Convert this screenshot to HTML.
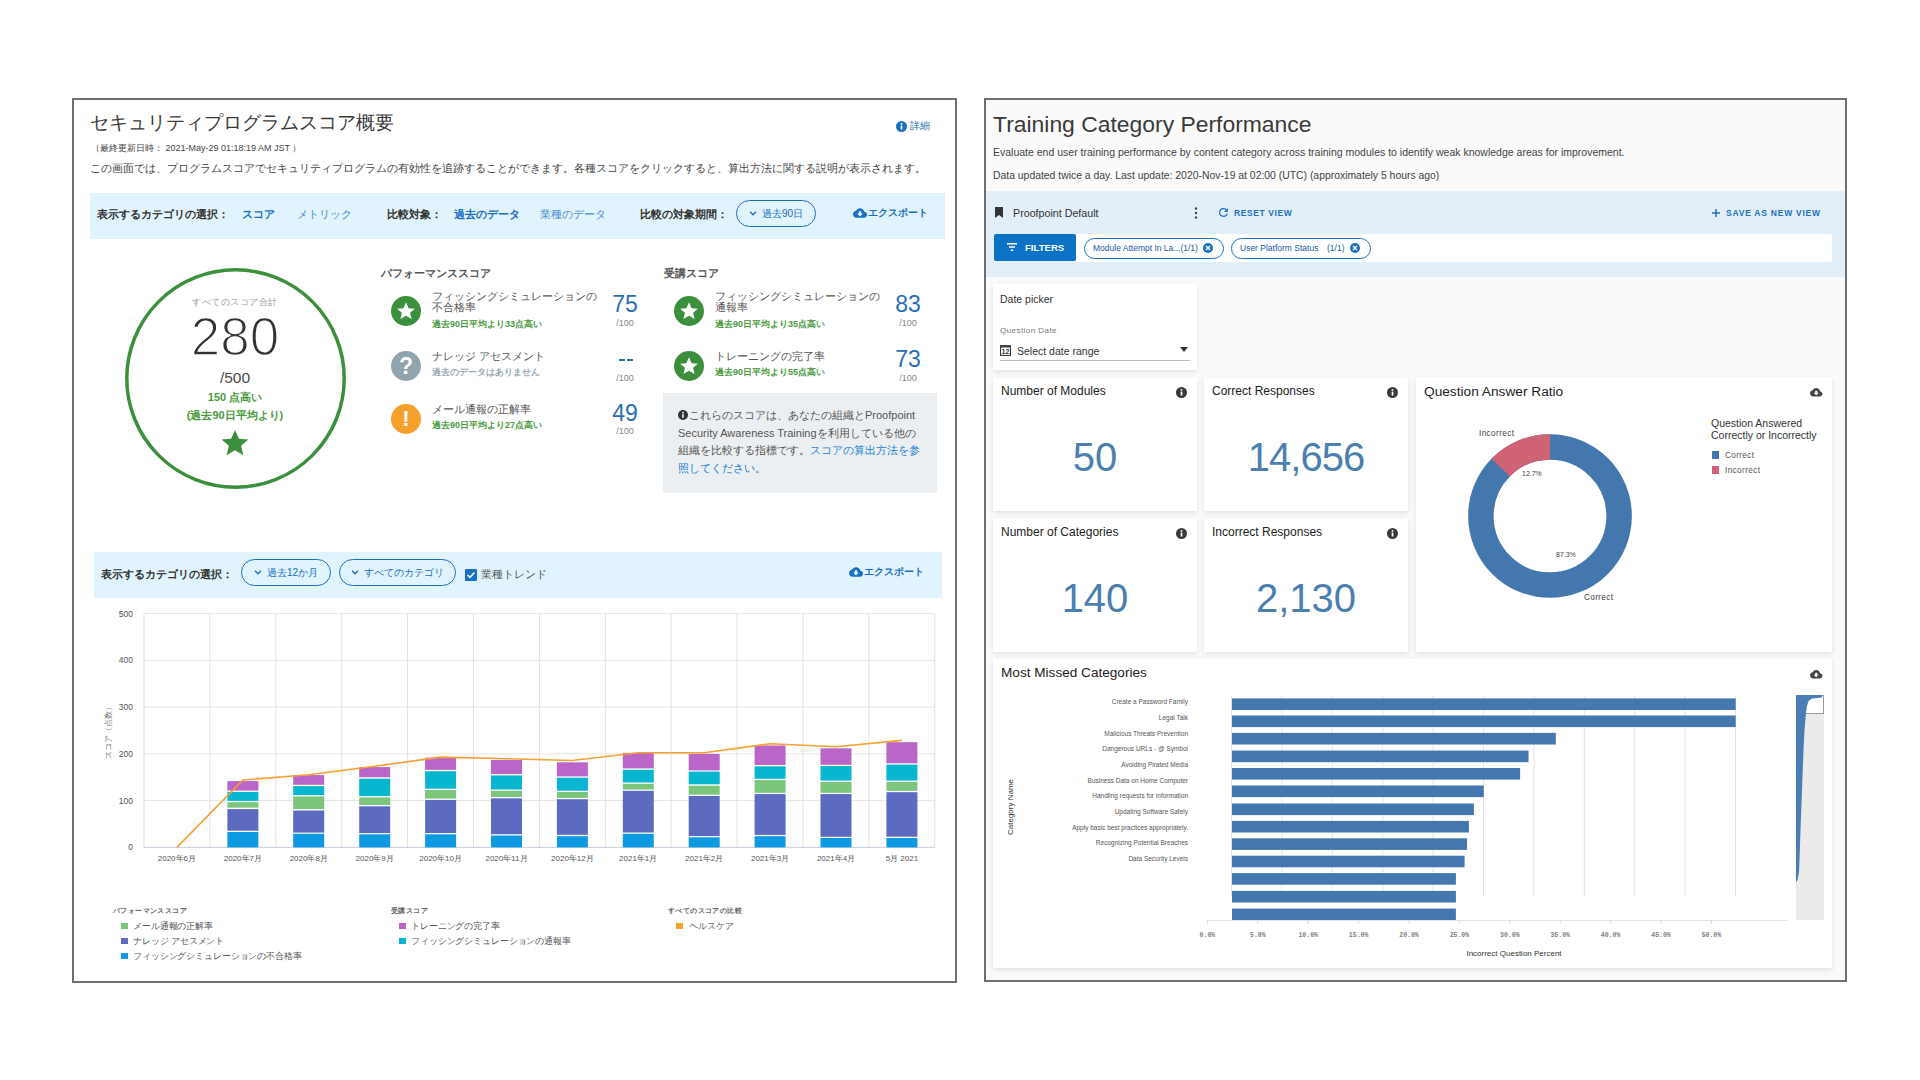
<!DOCTYPE html>
<html><head><meta charset="utf-8">
<style>
*{box-sizing:border-box;margin:0;padding:0}
html,body{width:1920px;height:1080px;overflow:hidden;background:#fff;font-family:"Liberation Sans",sans-serif;color:#333}
.a{position:absolute;white-space:nowrap}
#L{position:absolute;left:72px;top:98px;width:885px;height:885px;border:2px solid #707070;background:#fff}
#R{position:absolute;left:984px;top:98px;width:863px;height:884px;border:2px solid #6f6f6f;background:#fafafa}
.blue{color:#1a70c0}
.grn{color:#3f9a3f;font-weight:bold}
.card{background:#fff;box-shadow:0 2px 5px rgba(0,0,0,0.10)}
</style></head><body>
<div id="L"></div>
<div id="R"></div>

<!-- LEFT TOP -->
<div class="a" style="left:90px;top:110px;font-size:19px;color:#3a3a3a;">セキュリティプログラムスコア概要</div>
<div class="a" style="left:91px;top:142px;font-size:9px;color:#444">（最終更新日時： 2021-May-29 01:18:19 AM JST ）</div>
<div class="a" style="left:90px;top:161px;font-size:11px;color:#444">この画面では、プログラムスコアでセキュリティプログラムの有効性を追跡することができます。各種スコアをクリックすると、算出方法に関する説明が表示されます。</div>
<svg class="a" style="left:896px;top:121px" width="11" height="11" viewBox="0 0 12 12"><circle cx="6" cy="6" r="6" fill="#1a70c0"/><rect x="5.1" y="5" width="1.8" height="4.3" fill="#fff"/><circle cx="6" cy="3.2" r="1" fill="#fff"/></svg><div class="a" style="left:910px;top:119px;font-size:10px;color:#1a70c0">詳細</div>

<div class="a" style="left:90px;top:193px;width:855px;height:46px;background:#e1f3fc"></div>
<div class="a" style="left:97px;top:207px;font-size:11px;font-weight:bold;color:#333">表示するカテゴリの選択：</div>
<div class="a blue" style="left:242px;top:207px;font-size:11px;font-weight:bold">スコア</div>
<div class="a blue" style="left:297px;top:207px;font-size:11px;color:#4a8ad0">メトリック</div>
<div class="a" style="left:387px;top:207px;font-size:11px;font-weight:bold;color:#333">比較対象：</div>
<div class="a blue" style="left:454px;top:207px;font-size:11px;font-weight:bold">過去のデータ</div>
<div class="a blue" style="left:540px;top:207px;font-size:11px;color:#4a8ad0">業種のデータ</div>
<div class="a" style="left:640px;top:207px;font-size:11px;font-weight:bold;color:#333">比較の対象期間：</div>
<div class="a" style="left:736px;top:200px;width:80px;height:27px;border:1px solid #1a70c0;border-radius:14px;font-size:10px;color:#1a70c0;text-align:center;line-height:25px"><svg width="8" height="5" viewBox="0 0 8 5" style="vertical-align:1px;margin-right:5px"><path d="M1 0.8l3 3 3-3" stroke="#1a70c0" stroke-width="1.3" fill="none"/></svg>過去90日</div>
<div class="a" style="left:853px;top:208px;line-height:0"><svg width="14" height="10" viewBox="0 4 24 16"><path d="M19.35 10.04C18.67 6.59 15.64 4 12 4 9.11 4 6.6 5.64 5.35 8.04 2.34 8.36 0 10.91 0 14c0 3.31 2.69 6 6 6h13c2.76 0 5-2.24 5-5 0-2.64-2.05-4.78-4.65-4.96zM17 13l-5 5-5-5h3V9h4v4h3z" fill="#1a70c0"/></svg></div><div class="a blue" style="left:868px;top:206px;font-size:10px;font-weight:bold">エクスポート</div>


<!-- CIRCLE -->
<svg class="a" style="left:120px;top:263px" width="231" height="231"><circle cx="115.5" cy="115.5" r="108.7" fill="none" stroke="#3c8f3c" stroke-width="3.5"/></svg>
<div class="a" style="left:135px;top:296px;width:200px;text-align:center;font-size:9px;color:#999;letter-spacing:0.5px">すべてのスコア合計</div>
<div class="a" style="left:135px;top:307px;width:200px;text-align:center;font-size:53px;color:#333;line-height:60px;-webkit-text-stroke:1.6px #fff;letter-spacing:0px">280</div>
<div class="a" style="left:135px;top:369px;width:200px;text-align:center;font-size:15.5px;color:#4a4a4a">/500</div>
<div class="a grn" style="left:135px;top:390px;width:200px;text-align:center;font-size:11px;color:#4b9a40">150 点高い</div>
<div class="a grn" style="left:135px;top:408px;width:200px;text-align:center;font-size:11px;color:#4b9a40">(過去90日平均より)</div>
<div class="a" style="left:220px;top:428px"><svg width="30" height="30" viewBox="0 0 24 24"><path d="M12 1.5l3.1 7.1 7.6.6-5.8 5 1.8 7.5L12 17.7l-6.7 4 1.8-7.5-5.8-5 7.6-.6z" fill="#3c8f3c"/></svg></div>

<!-- PERFORMANCE -->
<div class="a" style="left:381px;top:266px;font-size:11px;font-weight:bold;color:#555">パフォーマンススコア</div>
<div class="a" style="left:391px;top:296px;width:30px;height:30px;border-radius:50%;background:#3c8f3c"><svg style="position:absolute;left:5px;top:4.5px" width="20" height="20" viewBox="0 0 24 24"><path d="M12 1.5l3.1 7.1 7.6.6-5.8 5 1.8 7.5L12 17.7l-6.7 4 1.8-7.5-5.8-5 7.6-.6z" fill="#fff"/></svg></div>
<div class="a" style="left:432px;top:291px;font-size:10.5px;color:#555;line-height:11px">フィッシングシミュレーションの<br>不合格率</div>
<div class="a grn" style="left:432px;top:318px;font-size:9px;color:#4b9a40">過去90日平均より33点高い</div>
<div class="a" style="left:600px;top:291px;width:50px;text-align:center;font-size:23px;color:#2a6fb5">75</div>
<div class="a" style="left:600px;top:318px;width:50px;text-align:center;font-size:9px;color:#888">/100</div>

<div class="a" style="left:391px;top:351px;width:30px;height:30px;border-radius:50%;background:#90a4ae;color:#fff;font-size:23px;font-weight:bold;text-align:center;line-height:30px">?</div>
<div class="a" style="left:432px;top:350px;font-size:10.5px;color:#555">ナレッジ アセスメント</div>
<div class="a" style="left:432px;top:366px;font-size:9px;color:#9aabb5;font-weight:bold">過去のデータはありません</div>
<div class="a" style="left:619px;top:359px;width:6px;height:2px;background:#2a6fb5"></div><div class="a" style="left:626.5px;top:359px;width:6px;height:2px;background:#2a6fb5"></div>
<div class="a" style="left:600px;top:373px;width:50px;text-align:center;font-size:9px;color:#888">/100</div>

<div class="a" style="left:391px;top:404px;width:30px;height:30px;border-radius:50%;background:#f5a02a;color:#fff;font-size:22px;font-weight:bold;text-align:center;line-height:30px">!</div>
<div class="a" style="left:432px;top:403px;font-size:10.5px;color:#555">メール通報の正解率</div>
<div class="a grn" style="left:432px;top:419px;font-size:9px;color:#4b9a40">過去90日平均より27点高い</div>
<div class="a" style="left:600px;top:400px;width:50px;text-align:center;font-size:23px;color:#2a6fb5">49</div>
<div class="a" style="left:600px;top:426px;width:50px;text-align:center;font-size:9px;color:#888">/100</div>

<!-- JUKOU -->
<div class="a" style="left:664px;top:266px;font-size:11px;font-weight:bold;color:#555">受講スコア</div>
<div class="a" style="left:674px;top:296px;width:30px;height:30px;border-radius:50%;background:#3c8f3c"><svg style="position:absolute;left:5px;top:4.5px" width="20" height="20" viewBox="0 0 24 24"><path d="M12 1.5l3.1 7.1 7.6.6-5.8 5 1.8 7.5L12 17.7l-6.7 4 1.8-7.5-5.8-5 7.6-.6z" fill="#fff"/></svg></div>
<div class="a" style="left:715px;top:291px;font-size:10.5px;color:#555;line-height:11px">フィッシングシミュレーションの<br>通報率</div>
<div class="a grn" style="left:715px;top:318px;font-size:9px;color:#4b9a40">過去90日平均より35点高い</div>
<div class="a" style="left:883px;top:291px;width:50px;text-align:center;font-size:23px;color:#2a6fb5">83</div>
<div class="a" style="left:883px;top:318px;width:50px;text-align:center;font-size:9px;color:#888">/100</div>
<div class="a" style="left:674px;top:351px;width:30px;height:30px;border-radius:50%;background:#3c8f3c"><svg style="position:absolute;left:5px;top:4.5px" width="20" height="20" viewBox="0 0 24 24"><path d="M12 1.5l3.1 7.1 7.6.6-5.8 5 1.8 7.5L12 17.7l-6.7 4 1.8-7.5-5.8-5 7.6-.6z" fill="#fff"/></svg></div>
<div class="a" style="left:715px;top:350px;font-size:10.5px;color:#555">トレーニングの完了率</div>
<div class="a grn" style="left:715px;top:366px;font-size:9px;color:#4b9a40">過去90日平均より55点高い</div>
<div class="a" style="left:883px;top:346px;width:50px;text-align:center;font-size:23px;color:#2a6fb5">73</div>
<div class="a" style="left:883px;top:373px;width:50px;text-align:center;font-size:9px;color:#888">/100</div>

<div class="a" style="left:663px;top:393px;width:274px;height:100px;background:#eceff1"></div>
<div class="a" style="left:678px;top:407px;font-size:11px;color:#555;line-height:17.6px;white-space:normal;width:250px"><svg width="10" height="10" viewBox="0 0 12 12" style="vertical-align:-1px;margin-right:1px"><circle cx="6" cy="6" r="6" fill="#333"/><rect x="5.1" y="5" width="1.8" height="4.3" fill="#fff"/><circle cx="6" cy="3.2" r="1" fill="#fff"/></svg>これらのスコアは、あなたの組織とProofpoint<br>Security Awareness Trainingを利用している他の<br>組織を比較する指標です。<span style="color:#1a80d0">スコアの算出方法を参<br>照してください。</span></div>

<!-- FILTER 2 -->
<div class="a" style="left:94px;top:552px;width:848px;height:46px;background:#e1f3fc"></div>
<div class="a" style="left:101px;top:567px;font-size:11px;font-weight:bold;color:#333">表示するカテゴリの選択：</div>
<div class="a" style="left:241px;top:559px;width:90px;height:27px;border:1px solid #1a70c0;border-radius:14px;font-size:10px;color:#1a70c0;text-align:center;line-height:25px"><svg width="8" height="5" viewBox="0 0 8 5" style="vertical-align:1px;margin-right:5px"><path d="M1 0.8l3 3 3-3" stroke="#1a70c0" stroke-width="1.3" fill="none"/></svg>過去12か月</div>
<div class="a" style="left:339px;top:559px;width:117px;height:27px;border:1px solid #1a70c0;border-radius:14px;font-size:10px;color:#1a70c0;text-align:center;line-height:25px"><svg width="8" height="5" viewBox="0 0 8 5" style="vertical-align:1px;margin-right:5px"><path d="M1 0.8l3 3 3-3" stroke="#1a70c0" stroke-width="1.3" fill="none"/></svg>すべてのカテゴリ</div>
<div class="a" style="left:465px;top:569px;width:12px;height:12px;background:#1a70c0;border-radius:1px"><svg style="position:absolute;left:1px;top:1px" width="10" height="10" viewBox="0 0 10 10"><path d="M1.5 5l2.3 2.3L8.5 2.5" stroke="#fff" stroke-width="1.6" fill="none"/></svg></div>
<div class="a" style="left:481px;top:567px;font-size:11px;color:#555">業種トレンド</div>
<div class="a" style="left:849px;top:567px;line-height:0"><svg width="14" height="10" viewBox="0 4 24 16"><path d="M19.35 10.04C18.67 6.59 15.64 4 12 4 9.11 4 6.6 5.64 5.35 8.04 2.34 8.36 0 10.91 0 14c0 3.31 2.69 6 6 6h13c2.76 0 5-2.24 5-5 0-2.64-2.05-4.78-4.65-4.96zM17 13l-5 5-5-5h3V9h4v4h3z" fill="#1a70c0"/></svg></div><div class="a blue" style="left:864px;top:565px;font-size:10px;font-weight:bold">エクスポート</div>
<svg class="a" style="left:0;top:0" width="1920" height="1080"><line x1="144" x2="934.8000000000001" y1="847.4" y2="847.4" stroke="#e6e6e6" stroke-width="1"/><line x1="144" x2="934.8000000000001" y1="800.6" y2="800.6" stroke="#e6e6e6" stroke-width="1"/><line x1="144" x2="934.8000000000001" y1="753.9" y2="753.9" stroke="#e6e6e6" stroke-width="1"/><line x1="144" x2="934.8000000000001" y1="707.1" y2="707.1" stroke="#e6e6e6" stroke-width="1"/><line x1="144" x2="934.8000000000001" y1="660.4" y2="660.4" stroke="#e6e6e6" stroke-width="1"/><line x1="144" x2="934.8000000000001" y1="613.6" y2="613.6" stroke="#e6e6e6" stroke-width="1"/><line x1="144.0" x2="144.0" y1="613.6" y2="847.4" stroke="#e2e2e2" stroke-width="1"/><line x1="209.9" x2="209.9" y1="613.6" y2="847.4" stroke="#e2e2e2" stroke-width="1"/><line x1="275.8" x2="275.8" y1="613.6" y2="847.4" stroke="#e2e2e2" stroke-width="1"/><line x1="341.7" x2="341.7" y1="613.6" y2="847.4" stroke="#e2e2e2" stroke-width="1"/><line x1="407.6" x2="407.6" y1="613.6" y2="847.4" stroke="#e2e2e2" stroke-width="1"/><line x1="473.5" x2="473.5" y1="613.6" y2="847.4" stroke="#e2e2e2" stroke-width="1"/><line x1="539.4" x2="539.4" y1="613.6" y2="847.4" stroke="#e2e2e2" stroke-width="1"/><line x1="605.3" x2="605.3" y1="613.6" y2="847.4" stroke="#e2e2e2" stroke-width="1"/><line x1="671.2" x2="671.2" y1="613.6" y2="847.4" stroke="#e2e2e2" stroke-width="1"/><line x1="737.1" x2="737.1" y1="613.6" y2="847.4" stroke="#e2e2e2" stroke-width="1"/><line x1="803.0" x2="803.0" y1="613.6" y2="847.4" stroke="#e2e2e2" stroke-width="1"/><line x1="868.9" x2="868.9" y1="613.6" y2="847.4" stroke="#e2e2e2" stroke-width="1"/><line x1="934.8" x2="934.8" y1="613.6" y2="847.4" stroke="#e2e2e2" stroke-width="1"/><line x1="144" x2="934.8000000000001" y1="847.4" y2="847.4" stroke="#ccd3e0" stroke-width="1"/><rect x="227.4" y="832.0" width="31" height="15.4" fill="#0d9ae0"/><rect x="227.4" y="809.1" width="31" height="21.6" fill="#5c6bc0"/><rect x="227.4" y="802.2" width="31" height="5.5" fill="#7cc57c"/><rect x="227.4" y="791.9" width="31" height="9.0" fill="#08b6d0"/><rect x="227.4" y="781.1" width="31" height="9.5" fill="#b966c8"/><rect x="293.2" y="833.8" width="31" height="13.6" fill="#0d9ae0"/><rect x="293.2" y="810.5" width="31" height="22.1" fill="#5c6bc0"/><rect x="293.2" y="796.4" width="31" height="12.7" fill="#7cc57c"/><rect x="293.2" y="786.1" width="31" height="9.0" fill="#08b6d0"/><rect x="293.2" y="775.1" width="31" height="9.7" fill="#b966c8"/><rect x="359.2" y="834.3" width="31" height="13.1" fill="#0d9ae0"/><rect x="359.2" y="806.3" width="31" height="26.8" fill="#5c6bc0"/><rect x="359.2" y="797.4" width="31" height="7.6" fill="#7cc57c"/><rect x="359.2" y="778.7" width="31" height="17.4" fill="#08b6d0"/><rect x="359.2" y="767.1" width="31" height="10.2" fill="#b966c8"/><rect x="425.1" y="834.3" width="31" height="13.1" fill="#0d9ae0"/><rect x="425.1" y="799.9" width="31" height="33.1" fill="#5c6bc0"/><rect x="425.1" y="790.0" width="31" height="8.6" fill="#7cc57c"/><rect x="425.1" y="771.2" width="31" height="17.5" fill="#08b6d0"/><rect x="425.1" y="757.6" width="31" height="12.3" fill="#b966c8"/><rect x="491.0" y="835.5" width="31" height="11.9" fill="#0d9ae0"/><rect x="491.0" y="798.3" width="31" height="35.9" fill="#5c6bc0"/><rect x="491.0" y="790.8" width="31" height="6.2" fill="#7cc57c"/><rect x="491.0" y="775.4" width="31" height="14.1" fill="#08b6d0"/><rect x="491.0" y="760.0" width="31" height="14.1" fill="#b966c8"/><rect x="556.9" y="836.2" width="31" height="11.2" fill="#0d9ae0"/><rect x="556.9" y="799.2" width="31" height="35.6" fill="#5c6bc0"/><rect x="556.9" y="792.0" width="31" height="5.9" fill="#7cc57c"/><rect x="556.9" y="777.7" width="31" height="13.0" fill="#08b6d0"/><rect x="556.9" y="762.3" width="31" height="14.1" fill="#b966c8"/><rect x="622.8" y="833.8" width="31" height="13.6" fill="#0d9ae0"/><rect x="622.8" y="790.8" width="31" height="41.7" fill="#5c6bc0"/><rect x="622.8" y="783.8" width="31" height="5.7" fill="#7cc57c"/><rect x="622.8" y="769.8" width="31" height="12.7" fill="#08b6d0"/><rect x="622.8" y="752.9" width="31" height="15.5" fill="#b966c8"/><rect x="688.7" y="837.3" width="31" height="10.1" fill="#0d9ae0"/><rect x="688.7" y="796.0" width="31" height="40.0" fill="#5c6bc0"/><rect x="688.7" y="785.7" width="31" height="9.0" fill="#7cc57c"/><rect x="688.7" y="771.6" width="31" height="12.7" fill="#08b6d0"/><rect x="688.7" y="753.9" width="31" height="16.5" fill="#b966c8"/><rect x="754.6" y="836.2" width="31" height="11.2" fill="#0d9ae0"/><rect x="754.6" y="794.1" width="31" height="40.8" fill="#5c6bc0"/><rect x="754.6" y="780.1" width="31" height="12.7" fill="#7cc57c"/><rect x="754.6" y="766.3" width="31" height="12.5" fill="#08b6d0"/><rect x="754.6" y="745.5" width="31" height="19.5" fill="#b966c8"/><rect x="820.5" y="838.0" width="31" height="9.4" fill="#0d9ae0"/><rect x="820.5" y="794.1" width="31" height="42.7" fill="#5c6bc0"/><rect x="820.5" y="781.9" width="31" height="10.9" fill="#7cc57c"/><rect x="820.5" y="766.0" width="31" height="14.6" fill="#08b6d0"/><rect x="820.5" y="748.3" width="31" height="16.5" fill="#b966c8"/><rect x="886.4" y="838.0" width="31" height="9.4" fill="#0d9ae0"/><rect x="886.4" y="792.2" width="31" height="44.5" fill="#5c6bc0"/><rect x="886.4" y="781.9" width="31" height="9.0" fill="#7cc57c"/><rect x="886.4" y="764.6" width="31" height="16.0" fill="#08b6d0"/><rect x="886.4" y="742.2" width="31" height="21.1" fill="#b966c8"/><polyline points="176.9,847.4 242.9,780.0 308.8,774.8 374.7,766.3 440.6,757.1 506.5,758.7 572.4,760.5 638.2,752.7 704.2,752.7 770.1,743.8 836.0,746.7 901.9,740.4" fill="none" stroke="#f5a030" stroke-width="1.6"/><text x="133" y="850.4" font-size="8.5" fill="#555" text-anchor="end">0</text><text x="133" y="803.6" font-size="8.5" fill="#555" text-anchor="end">100</text><text x="133" y="756.9" font-size="8.5" fill="#555" text-anchor="end">200</text><text x="133" y="710.1" font-size="8.5" fill="#555" text-anchor="end">300</text><text x="133" y="663.4" font-size="8.5" fill="#555" text-anchor="end">400</text><text x="133" y="616.6" font-size="8.5" fill="#555" text-anchor="end">500</text><text x="176.9" y="861" font-size="8" fill="#555" text-anchor="middle">2020年6月</text><text x="242.9" y="861" font-size="8" fill="#555" text-anchor="middle">2020年7月</text><text x="308.8" y="861" font-size="8" fill="#555" text-anchor="middle">2020年8月</text><text x="374.7" y="861" font-size="8" fill="#555" text-anchor="middle">2020年9月</text><text x="440.6" y="861" font-size="8" fill="#555" text-anchor="middle">2020年10月</text><text x="506.5" y="861" font-size="8" fill="#555" text-anchor="middle">2020年11月</text><text x="572.4" y="861" font-size="8" fill="#555" text-anchor="middle">2020年12月</text><text x="638.2" y="861" font-size="8" fill="#555" text-anchor="middle">2021年1月</text><text x="704.2" y="861" font-size="8" fill="#555" text-anchor="middle">2021年2月</text><text x="770.1" y="861" font-size="8" fill="#555" text-anchor="middle">2021年3月</text><text x="836.0" y="861" font-size="8" fill="#555" text-anchor="middle">2021年4月</text><text x="901.9" y="861" font-size="8" fill="#555" text-anchor="middle">5月 2021</text><text transform="translate(111,731) rotate(-90)" font-size="8" fill="#777" text-anchor="middle">スコア（点数）</text></svg>
<!-- LEGEND -->
<div class="a" style="left:113px;top:906px;font-size:7px;font-weight:bold;color:#666;letter-spacing:0.4px">パフォーマンススコア</div>
<div class="a" style="left:121px;top:922.5px;width:6.5px;height:6.5px;background:#7cc57c"></div>
<div class="a" style="left:133px;top:920px;font-size:9px;color:#555;letter-spacing:-0.12px">メール通報の正解率</div>
<div class="a" style="left:121px;top:937.5px;width:6.5px;height:6.5px;background:#5c6bc0"></div>
<div class="a" style="left:133px;top:935px;font-size:9px;color:#555;letter-spacing:-0.12px">ナレッジ アセスメント</div>
<div class="a" style="left:121px;top:952.5px;width:6.5px;height:6.5px;background:#0d9ae0"></div>
<div class="a" style="left:133px;top:950px;font-size:9px;color:#555;letter-spacing:-0.12px">フィッシングシミュレーションの不合格率</div>
<div class="a" style="left:391px;top:906px;font-size:7px;font-weight:bold;color:#666;letter-spacing:0.4px">受講スコア</div>
<div class="a" style="left:399px;top:922.5px;width:6.5px;height:6.5px;background:#b966c8"></div>
<div class="a" style="left:411px;top:920px;font-size:9px;color:#555;letter-spacing:-0.12px">トレーニングの完了率</div>
<div class="a" style="left:399px;top:937.5px;width:6.5px;height:6.5px;background:#08b6d0"></div>
<div class="a" style="left:411px;top:935px;font-size:9px;color:#555;letter-spacing:-0.12px">フィッシングシミュレーションの通報率</div>
<div class="a" style="left:668px;top:906px;font-size:7px;font-weight:bold;color:#666;letter-spacing:0.4px">すべてのスコアの比較</div>
<div class="a" style="left:676px;top:922.5px;width:6.5px;height:6.5px;background:#f5a030"></div>
<div class="a" style="left:689px;top:920px;font-size:9px;color:#555;letter-spacing:-0.12px">ヘルスケア</div>

<!-- RIGHT -->
<div class="a" style="left:993px;top:111px;font-size:22.9px;color:#3a3a3a">Training Category Performance</div>
<div class="a" style="left:993px;top:146px;font-size:10.5px;color:#444">Evaluate end user training performance by content category across training modules to identify weak knowledge areas for improvement.</div>
<div class="a" style="left:993px;top:170px;font-size:10.4px;color:#444">Data updated twice a day. Last update: 2020-Nov-19 at 02:00 (UTC) (approximately 5 hours ago)</div>
<div class="a" style="left:986px;top:191px;width:859px;height:86px;background:#e3eff8"></div>
<svg class="a" style="left:995px;top:207px" width="8" height="11" viewBox="0 0 8 11"><path d="M0 0h8v11L4 8 0 11z" fill="#333"/></svg>
<div class="a" style="left:1013px;top:207px;font-size:10.7px;color:#333">Proofpoint Default</div>
<svg class="a" style="left:1194px;top:207px" width="4" height="12" viewBox="0 0 4 12"><circle cx="2" cy="1.5" r="1.2" fill="#444"/><circle cx="2" cy="6" r="1.2" fill="#444"/><circle cx="2" cy="10.5" r="1.2" fill="#444"/></svg>
<svg class="a" style="left:1218px;top:207px" width="11" height="11" viewBox="2 2 20 20"><path d="M17.65 6.35A7.96 7.96 0 0 0 12 4a8 8 0 1 0 7.73 10h-2.08A6 6 0 1 1 12 6c1.66 0 3.14.69 4.22 1.78L13 11h7V4l-2.35 2.35z" fill="#1a70c0"/></svg>
<div class="a" style="left:1234px;top:208px;font-size:8.5px;font-weight:bold;color:#1a70c0;letter-spacing:0.6px">RESET VIEW</div>
<svg class="a" style="left:1712px;top:209px" width="8" height="8" viewBox="0 0 8 8"><path d="M4 0v8M0 4h8" stroke="#1a70c0" stroke-width="1.5"/></svg>
<div class="a" style="left:1726px;top:208px;font-size:8.5px;font-weight:bold;color:#1a70c0;letter-spacing:0.76px">SAVE AS NEW VIEW</div>
<div class="a" style="left:1076px;top:234px;width:756px;height:28px;background:#fff;border-radius:0 3px 3px 0"></div>
<div class="a" style="left:994px;top:234px;width:82px;height:27px;background:#0b72c5;border-radius:2px"></div>
<svg class="a" style="left:1007px;top:243px" width="10" height="8" viewBox="0 0 10 8"><path d="M0 0.75h10M2 4h6M3.8 7.25h2.4" stroke="#fff" stroke-width="1.4"/></svg>
<div class="a" style="left:1025px;top:242px;font-size:9.6px;font-weight:bold;color:#fff">FILTERS</div>
<div class="a" style="left:1084px;top:238px;width:140px;height:21px;border:1px solid #1a70c0;border-radius:11px;background:#fff"></div>
<div class="a" style="left:1093px;top:243px;font-size:8.5px;color:#1a5aa0">Module Attempt In La...(1/1)</div>
<svg class="a" style="left:1203px;top:243px" width="10" height="10" viewBox="0 0 10 10"><circle cx="5" cy="5" r="5" fill="#1a70c0"/><path d="M3 3l4 4M7 3l-4 4" stroke="#fff" stroke-width="1.4"/></svg>
<div class="a" style="left:1231px;top:238px;width:140px;height:21px;border:1px solid #1a70c0;border-radius:11px;background:#fff"></div>
<div class="a" style="left:1240px;top:243px;font-size:8.5px;color:#1a5aa0">User Platform Status</div><div class="a" style="left:1327px;top:243px;font-size:8.5px;color:#1a5aa0">(1/1)</div>
<svg class="a" style="left:1350px;top:243px" width="10" height="10" viewBox="0 0 10 10"><circle cx="5" cy="5" r="5" fill="#1a70c0"/><path d="M3 3l4 4M7 3l-4 4" stroke="#fff" stroke-width="1.4"/></svg>

<!-- cards -->
<div class="a card" style="left:993px;top:284px;width:204px;height:86px"></div>
<div class="a" style="left:1000px;top:293px;font-size:10.5px;color:#333">Date picker</div>
<div class="a" style="left:1000px;top:326px;font-size:8px;color:#777;letter-spacing:0.45px">Question Date</div>
<svg class="a" style="left:1000px;top:345px" width="11" height="11" viewBox="0 0 11 11"><rect x="0.55" y="0.8" width="9.9" height="9.65" fill="none" stroke="#3a3a3a" stroke-width="1.1"/><rect x="0.55" y="0.3" width="9.9" height="2.2" fill="#3a3a3a"/><text x="5.5" y="9.3" font-size="7" font-weight="bold" text-anchor="middle" fill="#333" font-family="Liberation Sans">12</text></svg>
<div class="a" style="left:1017px;top:345px;font-size:10.5px;color:#333">Select date range</div>
<svg class="a" style="left:1180px;top:347px" width="8" height="5" viewBox="0 0 8 5"><path d="M0 0h8L4 5z" fill="#333"/></svg>
<div class="a" style="left:1000px;top:360px;width:190px;height:1px;background:#bbb"></div>

<div class="a card" style="left:993px;top:378px;width:204px;height:133px"></div>
<div class="a" style="left:1001px;top:384px;font-size:12px;color:#222">Number of Modules</div>
<svg class="a" style="left:1175.5px;top:386.5px" width="11" height="11" viewBox="0 0 12 12"><circle cx="6" cy="6" r="6" fill="#3a3a3a"/><rect x="5.1" y="5" width="1.8" height="4.3" fill="#fff"/><circle cx="6" cy="3.2" r="1" fill="#fff"/></svg>
<div class="a" style="left:993px;top:435px;width:204px;text-align:center;font-size:40px;color:#4a7fb0">50</div>
<div class="a card" style="left:1204px;top:378px;width:204px;height:133px"></div>
<div class="a" style="left:1212px;top:384px;font-size:12px;color:#222">Correct Responses</div>
<svg class="a" style="left:1386.5px;top:386.5px" width="11" height="11" viewBox="0 0 12 12"><circle cx="6" cy="6" r="6" fill="#3a3a3a"/><rect x="5.1" y="5" width="1.8" height="4.3" fill="#fff"/><circle cx="6" cy="3.2" r="1" fill="#fff"/></svg>
<div class="a" style="left:1204px;top:435px;width:204px;text-align:center;font-size:40px;color:#4a7fb0;letter-spacing:-1px">14,656</div>
<div class="a card" style="left:993px;top:519px;width:204px;height:133px"></div>
<div class="a" style="left:1001px;top:525px;font-size:12px;color:#222">Number of Categories</div>
<svg class="a" style="left:1175.5px;top:527.5px" width="11" height="11" viewBox="0 0 12 12"><circle cx="6" cy="6" r="6" fill="#3a3a3a"/><rect x="5.1" y="5" width="1.8" height="4.3" fill="#fff"/><circle cx="6" cy="3.2" r="1" fill="#fff"/></svg>
<div class="a" style="left:993px;top:576px;width:204px;text-align:center;font-size:40px;color:#4a7fb0">140</div>
<div class="a card" style="left:1204px;top:519px;width:204px;height:133px"></div>
<div class="a" style="left:1212px;top:525px;font-size:12px;color:#222">Incorrect Responses</div>
<svg class="a" style="left:1386.5px;top:527.5px" width="11" height="11" viewBox="0 0 12 12"><circle cx="6" cy="6" r="6" fill="#3a3a3a"/><rect x="5.1" y="5" width="1.8" height="4.3" fill="#fff"/><circle cx="6" cy="3.2" r="1" fill="#fff"/></svg>
<div class="a" style="left:1204px;top:576px;width:204px;text-align:center;font-size:40px;color:#4a7fb0">2,130</div>

<div class="a card" style="left:1416px;top:377px;width:416px;height:275px"></div>
<div class="a" style="left:1424px;top:384px;font-size:13.7px;color:#222">Question Answer Ratio</div>
<svg class="a" style="left:1810px;top:387.5px" width="12.5" height="9" viewBox="0 0 24 17"><path d="M19.4 6.5C18.7 2.8 15.6 0 12 0 9.1 0 6.6 1.6 5.3 4 2.3 4.4 0 6.9 0 10c0 3.3 2.7 6 6 6h13c2.8 0 5-2.2 5-5 0-2.6-2.1-4.7-4.6-4.5zM17 9l-5 5-5-5h3V5h4v4h3z" fill="#444"/></svg>
<svg class="a" style="left:1460px;top:426px" width="180" height="180" viewBox="-90 -90 180 180">
<circle r="69.1" fill="none" stroke="#4377ae" stroke-width="25.5"/>
<path d="M0 -69.1 A69.1 69.1 0 0 0 -49.4 -48.3" fill="none" stroke="#d06275" stroke-width="25.5"/>
</svg>
<div class="a" style="left:1479px;top:428px;font-size:8.3px;color:#444;letter-spacing:0.35px">Incorrect</div>
<div class="a" style="left:1522px;top:470px;font-size:7px;color:#444">12.7%</div>
<div class="a" style="left:1556px;top:551px;font-size:7px;color:#444">87.3%</div>
<div class="a" style="left:1584px;top:592px;font-size:8.3px;color:#444;letter-spacing:0.3px">Correct</div>
<div class="a" style="left:1711px;top:417px;font-size:10.5px;color:#333;line-height:12px">Question Answered<br>Correctly or Incorrectly</div>
<div class="a" style="left:1712px;top:451px;width:7px;height:8px;background:#4377ae"></div>
<div class="a" style="left:1725px;top:450px;font-size:8.3px;color:#555;letter-spacing:0.3px">Correct</div>
<div class="a" style="left:1712px;top:466px;width:7px;height:8px;background:#d06275"></div>
<div class="a" style="left:1725px;top:465px;font-size:8.3px;color:#555;letter-spacing:0.35px">Incorrect</div>

<div class="a card" style="left:993px;top:659px;width:839px;height:309px"></div>
<div class="a" style="left:1001px;top:665px;font-size:13.6px;color:#222">Most Missed Categories</div>
<svg class="a" style="left:1810px;top:669.5px" width="12.5" height="9" viewBox="0 0 24 17"><path d="M19.4 6.5C18.7 2.8 15.6 0 12 0 9.1 0 6.6 1.6 5.3 4 2.3 4.4 0 6.9 0 10c0 3.3 2.7 6 6 6h13c2.8 0 5-2.2 5-5 0-2.6-2.1-4.7-4.6-4.5zM17 9l-5 5-5-5h3V5h4v4h3z" fill="#444"/></svg>
<svg class="a" style="left:0;top:0" width="1920" height="1080"><line x1="1231.5" x2="1231.5" y1="695" y2="896" stroke="#e4e4e4" stroke-width="1"/><line x1="1281.9" x2="1281.9" y1="695" y2="896" stroke="#e4e4e4" stroke-width="1"/><line x1="1332.3" x2="1332.3" y1="695" y2="896" stroke="#e4e4e4" stroke-width="1"/><line x1="1382.7" x2="1382.7" y1="695" y2="896" stroke="#e4e4e4" stroke-width="1"/><line x1="1433.1" x2="1433.1" y1="695" y2="896" stroke="#e4e4e4" stroke-width="1"/><line x1="1483.5" x2="1483.5" y1="695" y2="896" stroke="#e4e4e4" stroke-width="1"/><line x1="1533.9" x2="1533.9" y1="695" y2="896" stroke="#e4e4e4" stroke-width="1"/><line x1="1584.3" x2="1584.3" y1="695" y2="896" stroke="#e4e4e4" stroke-width="1"/><line x1="1634.7" x2="1634.7" y1="695" y2="896" stroke="#e4e4e4" stroke-width="1"/><line x1="1685.1" x2="1685.1" y1="695" y2="896" stroke="#e4e4e4" stroke-width="1"/><line x1="1735.5" x2="1735.5" y1="695" y2="896" stroke="#e4e4e4" stroke-width="1"/><rect x="1232" y="698.4" width="503.7" height="11.6" fill="#4377ae"/><rect x="1232" y="715.5" width="503.7" height="11.6" fill="#4377ae"/><rect x="1232" y="732.9" width="323.8" height="11.6" fill="#4377ae"/><rect x="1232" y="750.6" width="296.5" height="11.6" fill="#4377ae"/><rect x="1232" y="768.0" width="288.1" height="11.6" fill="#4377ae"/><rect x="1232" y="785.5" width="251.8" height="11.6" fill="#4377ae"/><rect x="1232" y="803.5" width="241.9" height="11.6" fill="#4377ae"/><rect x="1232" y="820.9" width="236.9" height="11.6" fill="#4377ae"/><rect x="1232" y="838.3" width="235.0" height="11.6" fill="#4377ae"/><rect x="1232" y="855.7" width="232.6" height="11.6" fill="#4377ae"/><rect x="1232" y="873.1" width="223.9" height="11.6" fill="#4377ae"/><rect x="1232" y="890.9" width="223.9" height="11.6" fill="#4377ae"/><rect x="1232" y="908.6" width="223.9" height="11.6" fill="#4377ae"/><text x="1188" y="704.2" font-size="6.5" fill="#555" text-anchor="end">Create a Password Family</text><text x="1188" y="719.8" font-size="6.5" fill="#555" text-anchor="end">Legal Talk</text><text x="1188" y="735.7" font-size="6.5" fill="#555" text-anchor="end">Malicious Threats Prevention</text><text x="1188" y="751.1" font-size="6.5" fill="#555" text-anchor="end">Dangerous URLs - @ Symbol</text><text x="1188" y="766.5" font-size="6.5" fill="#555" text-anchor="end">Avoiding Pirated Media</text><text x="1188" y="782.8" font-size="6.5" fill="#555" text-anchor="end">Business Data on Home Computer</text><text x="1188" y="798.1" font-size="6.5" fill="#555" text-anchor="end">Handling requests for information</text><text x="1188" y="813.9" font-size="6.5" fill="#555" text-anchor="end">Updating Software Safely</text><text x="1188" y="829.5" font-size="6.5" fill="#555" text-anchor="end">Apply basic best practices appropriately.</text><text x="1188" y="844.8" font-size="6.5" fill="#555" text-anchor="end">Recognizing Potential Breaches</text><text x="1188" y="861.0" font-size="6.5" fill="#555" text-anchor="end">Data Security Levels</text><line x1="1207" x2="1788" y1="920.5" y2="920.5" stroke="#e4e4e4" stroke-width="1"/><line x1="1207.4" x2="1207.4" y1="920" y2="924" stroke="#ddd" stroke-width="1"/><text x="1207.4" y="937" font-size="6.5" fill="#808080" text-anchor="middle" font-family="Liberation Mono" font-weight="bold">0.0%</text><line x1="1257.8" x2="1257.8" y1="920" y2="924" stroke="#ddd" stroke-width="1"/><text x="1257.8" y="937" font-size="6.5" fill="#808080" text-anchor="middle" font-family="Liberation Mono" font-weight="bold">5.0%</text><line x1="1308.2" x2="1308.2" y1="920" y2="924" stroke="#ddd" stroke-width="1"/><text x="1308.2" y="937" font-size="6.5" fill="#808080" text-anchor="middle" font-family="Liberation Mono" font-weight="bold">10.0%</text><line x1="1358.6" x2="1358.6" y1="920" y2="924" stroke="#ddd" stroke-width="1"/><text x="1358.6" y="937" font-size="6.5" fill="#808080" text-anchor="middle" font-family="Liberation Mono" font-weight="bold">15.0%</text><line x1="1409.0" x2="1409.0" y1="920" y2="924" stroke="#ddd" stroke-width="1"/><text x="1409.0" y="937" font-size="6.5" fill="#808080" text-anchor="middle" font-family="Liberation Mono" font-weight="bold">20.0%</text><line x1="1459.4" x2="1459.4" y1="920" y2="924" stroke="#ddd" stroke-width="1"/><text x="1459.4" y="937" font-size="6.5" fill="#808080" text-anchor="middle" font-family="Liberation Mono" font-weight="bold">25.0%</text><line x1="1509.8" x2="1509.8" y1="920" y2="924" stroke="#ddd" stroke-width="1"/><text x="1509.8" y="937" font-size="6.5" fill="#808080" text-anchor="middle" font-family="Liberation Mono" font-weight="bold">30.0%</text><line x1="1560.2" x2="1560.2" y1="920" y2="924" stroke="#ddd" stroke-width="1"/><text x="1560.2" y="937" font-size="6.5" fill="#808080" text-anchor="middle" font-family="Liberation Mono" font-weight="bold">35.0%</text><line x1="1610.6" x2="1610.6" y1="920" y2="924" stroke="#ddd" stroke-width="1"/><text x="1610.6" y="937" font-size="6.5" fill="#808080" text-anchor="middle" font-family="Liberation Mono" font-weight="bold">40.0%</text><line x1="1661.0" x2="1661.0" y1="920" y2="924" stroke="#ddd" stroke-width="1"/><text x="1661.0" y="937" font-size="6.5" fill="#808080" text-anchor="middle" font-family="Liberation Mono" font-weight="bold">45.0%</text><line x1="1711.4" x2="1711.4" y1="920" y2="924" stroke="#ddd" stroke-width="1"/><text x="1711.4" y="937" font-size="6.5" fill="#808080" text-anchor="middle" font-family="Liberation Mono" font-weight="bold">50.0%</text><text x="1514" y="956" font-size="8" fill="#333" text-anchor="middle">Incorrect Question Percent</text><text transform="translate(1012.5,807) rotate(-90)" font-size="8" fill="#333" text-anchor="middle">Category Name</text><rect x="1796" y="695" width="28" height="225" fill="#ebebeb"/><rect x="1796.5" y="695.5" width="27" height="18" fill="#fff" stroke="#999" stroke-width="1"/><path d="M1796 695 L1822 695 L1822 697.5 L1812 698.5 L1808.5 701 L1807 706 L1806 713 L1804.5 730 L1803.5 750 L1802 790 L1800.5 830 L1799.5 860 L1799 872 L1797.5 880 L1796 882 Z" fill="#4a7db3"/></svg></body></html>
